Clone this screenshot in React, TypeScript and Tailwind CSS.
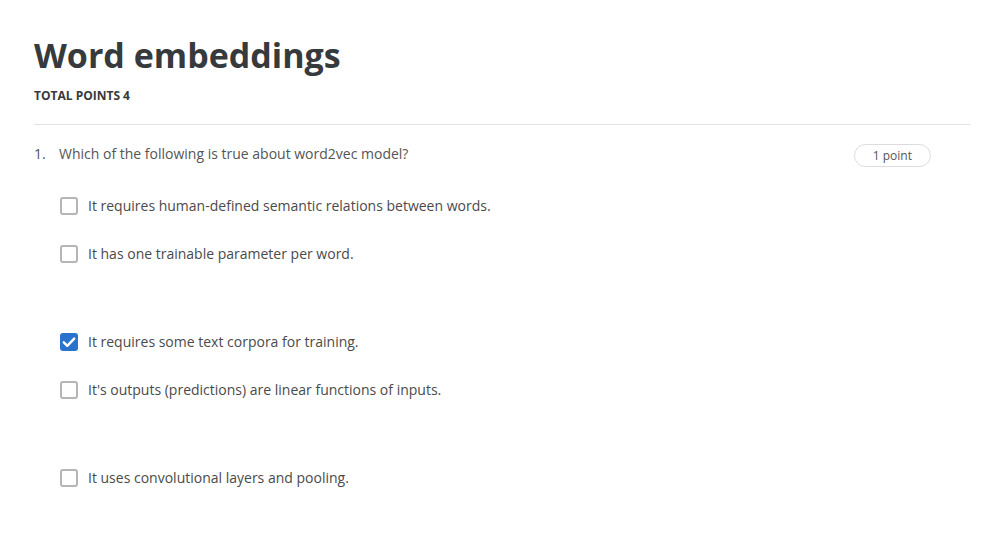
const options = [
  { label: "It requires human-defined semantic relations between words.", checked: false, gap: false },
  { label: "It has one trainable parameter per word.", checked: false, gap: false },
  { label: "It requires some text corpora for training.", checked: true, gap: true },
  { label: "It's outputs (predictions) are linear functions of inputs.", checked: false, gap: false },
  { label: "It uses convolutional layers and pooling.", checked: false, gap: true },
];

function Checkbox({ checked }: { checked: boolean }) {
  if (checked) {
    return (
      <span className="flex h-[18px] w-[18px] shrink-0 items-center justify-center rounded-[3px] bg-[#2a73cc]">
        <svg viewBox="0 0 18 18" className="h-[18px] w-[18px]" fill="none">
          <path d="M3.8 9.3 L7.3 12.8 L14.2 5.6" stroke="white" strokeWidth={2.4} strokeLinecap="round" strokeLinejoin="round" />
        </svg>
      </span>
    );
  }
  return <span className="h-[18px] w-[18px] shrink-0 rounded-[3px] border-2 border-[#b5b5b5] bg-white" />;
}

export default function App() {
  return (
    <div className="min-h-screen bg-white px-[34px] pt-[32px] font-['Open_Sans',sans-serif] text-[#373a3c]">
      <div className="w-[936px]">
        <h1 className="text-[34px] font-bold leading-[46px] text-[#373a3c]">Word embeddings</h1>
        <p className="mt-[10px] text-[12px] font-bold leading-[16px] text-[#373a3c]">TOTAL POINTS 4</p>
        <div className="mt-[20px] border-t border-[#e2e2e2]" />

        <div className="mt-[19px] flex items-start">
          <span className="w-[25px] text-sm leading-[20px] text-[#555]">1.</span>
          <p className="flex-1 text-sm leading-[20px] text-[#555]">Which of the following is true about word2vec model?</p>
          <span className="mr-[39px] rounded-full border border-[#dcdcdc] px-[18px] text-[12px] leading-[21px] text-[#555]">
            1 point
          </span>
        </div>

        <ul className="ml-[26px] mt-[30px]">
          {options.map((o) => (
            <li key={o.label} className={`flex h-[48px] items-start gap-[10px] ${o.gap ? "mt-[40px]" : ""}`}>
              <Checkbox checked={o.checked} />
              <span className="text-sm leading-[18px] text-[#4a4a4a]">{o.label}</span>
            </li>
          ))}
        </ul>
      </div>
    </div>
  );
}
